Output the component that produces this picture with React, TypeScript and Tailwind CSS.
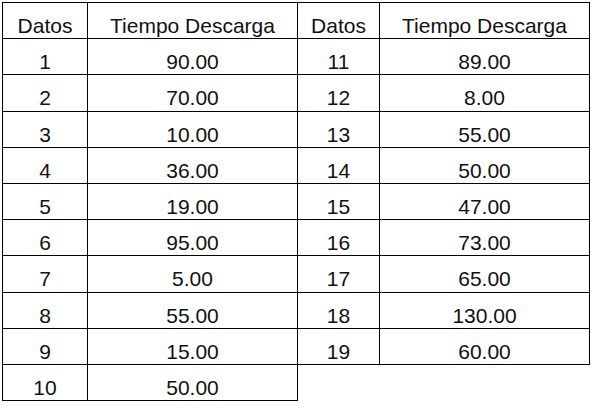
const left = [
  ["1", "90.00"],
  ["2", "70.00"],
  ["3", "10.00"],
  ["4", "36.00"],
  ["5", "19.00"],
  ["6", "95.00"],
  ["7", "5.00"],
  ["8", "55.00"],
  ["9", "15.00"],
  ["10", "50.00"],
];

const right = [
  ["11", "89.00"],
  ["12", "8.00"],
  ["13", "55.00"],
  ["14", "50.00"],
  ["15", "47.00"],
  ["16", "73.00"],
  ["17", "65.00"],
  ["18", "130.00"],
  ["19", "60.00"],
];

function Cell({ children }: { children: React.ReactNode }) {
  return (
    <div className="h-[36.2px] border-r border-b border-black pt-[12px] text-center text-[21px] leading-[21px]">
      {children}
    </div>
  );
}

function DataTable({ rows, first }: { rows: string[][]; first?: boolean }) {
  return (
    <div
      className={
        first
          ? "grid grid-cols-[85px_210px] border-t border-l border-black"
          : "grid grid-cols-[82px_210px] border-t border-black"
      }
    >
      <Cell>Datos</Cell>
      <Cell>Tiempo Descarga</Cell>
      {rows.map(([n, t]) => (
        <div key={n} className="contents">
          <Cell>{n}</Cell>
          <Cell>{t}</Cell>
        </div>
      ))}
    </div>
  );
}

export default function App() {
  return (
    <div className="h-[411px] w-[601px] overflow-hidden bg-white pt-[2px] pl-[2px] text-[#111] [font-family:'Liberation_Sans',Arial,sans-serif]">
      <div className="flex items-start">
        <DataTable rows={left} first />
        <DataTable rows={right} />
      </div>
    </div>
  );
}
